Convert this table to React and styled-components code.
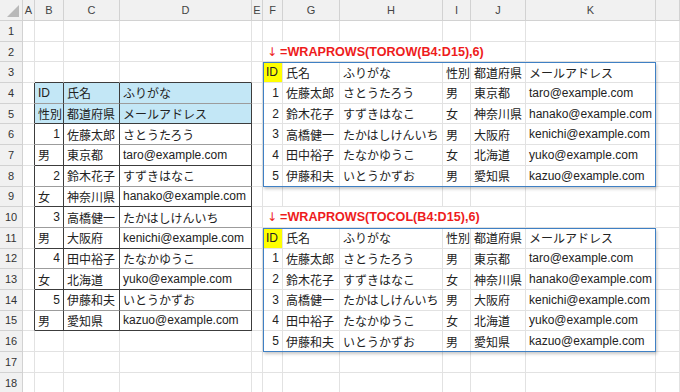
import React from "react";
import styled, { createGlobalStyle } from "styled-components";

const GRID = "#e2e2e2";
const HEAD_LINE = "#d2d2d2";
const INK = "#3c3c3c";
const SOFT = "#9c9c9c";
const BLUE_FILL = "#c3e7f6";

const COLS = ["A", "B", "C", "D", "E", "F", "G", "H", "I", "J", "K", ""];
const ROWS = 18;

const header = ["ID", "氏名", "ふりがな", "性別", "都道府県", "メールアドレス"];
const records = [
  [1, "佐藤太郎", "さとうたろう", "男", "東京都", "taro@example.com"],
  [2, "鈴木花子", "すずきはなこ", "女", "神奈川県", "hanako@example.com"],
  [3, "高橋健一", "たかはしけんいち", "男", "大阪府", "kenichi@example.com"],
  [4, "田中裕子", "たなかゆうこ", "女", "北海道", "yuko@example.com"],
  [5, "伊藤和夫", "いとうかずお", "男", "愛知県", "kazuo@example.com"],
];

// sheet cells keyed by "col,row" (col index 1 = A)
const buildCells = () => {
  const cells = {};
  const put = (c, r, v, extra = {}) => {
    cells[`${c},${r}`] = { v, ...extra };
  };

  // source table B4:D15
  const source = [header.slice(0, 3), header.slice(3)];
  records.forEach((rec) => {
    source.push(rec.slice(0, 3));
    source.push(rec.slice(3));
  });
  source.forEach((row, i) => {
    const r = 4 + i;
    row.forEach((v, j) => {
      put(2 + j, r, v, {
        fill: i < 2 ? BLUE_FILL : null,
        rb: INK,
        bb: r % 2 === 1 || r === 15 ? INK : SOFT,
      });
    });
    cells[`1,${r}`] = { v: "", rb: INK };
  });
  [2, 3, 4].forEach((c) => put(c, 3, "", { bb: INK }));

  // spilled results F3:K8 and F11:K16
  [3, 11].forEach((top) => {
    [header, ...records].forEach((row, i) => {
      row.forEach((v, j) => {
        put(6 + j, top + i, v, { fill: i === 0 && j === 0 ? "#ffff00" : null });
      });
    });
  });
  return cells;
};

const cells = buildCells();

const GlobalStyle = createGlobalStyle`
  html, body {
    margin: 0;
    padding: 0;
    background: #fff;
  }
  body {
    font-family: "Liberation Sans", "Noto Sans CJK JP", sans-serif;
    overflow: hidden;
  }
`;

const Sheet = styled.div`
  display: grid;
  grid-template-columns: 23px 12px 29px 56px 132px 11px 20px 57px 103px 28px 55px 130px 1fr;
  grid-template-rows: 21px repeat(${ROWS}, 20.7px);
  width: 680px;
  height: 392px;
  overflow: hidden;
`;

const Corner = styled.div`
  grid-row: 1;
  grid-column: 1;
  background: #f1f1f1;
  border-right: 1px solid ${HEAD_LINE};
  border-bottom: 1px solid ${HEAD_LINE};
  display: flex;
  align-items: flex-end;
  justify-content: flex-end;
  padding: 0 3px 3px 0;
  box-sizing: border-box;
`;

const ColHead = styled.div`
  grid-row: 1;
  grid-column: ${(p) => p.$c};
  background: #f1f1f1;
  border-right: 1px solid ${HEAD_LINE};
  border-bottom: 1px solid ${HEAD_LINE};
  box-sizing: border-box;
  display: flex;
  align-items: center;
  justify-content: center;
  font-size: 11px;
  color: #444;
`;

const RowHead = styled.div`
  grid-row: ${(p) => p.$r};
  grid-column: 1;
  background: #f1f1f1;
  border-right: 1px solid ${HEAD_LINE};
  border-bottom: 1px solid ${HEAD_LINE};
  box-sizing: border-box;
  display: flex;
  align-items: center;
  justify-content: center;
  font-size: 11px;
  color: #333;
`;

const Cell = styled.div`
  grid-row: ${(p) => p.$r};
  grid-column: ${(p) => p.$c};
  box-sizing: border-box;
  border-right: 1px solid ${(p) => p.$rb || GRID};
  border-bottom: 1px solid ${(p) => p.$bb || GRID};
  background: ${(p) => p.$fill || "transparent"};
  display: flex;
  align-items: center;
  justify-content: ${(p) => (p.$num ? "flex-end" : "flex-start")};
  padding: 0 3px;
  font-size: 12px;
  color: #222;
  white-space: nowrap;
  overflow: hidden;
`;

const Formula = styled.div`
  grid-row: ${(p) => p.$r};
  grid-column: 7 / 12;
  z-index: 1;
  background: #fff;
  border-right: 1px solid ${GRID};
  border-bottom: 1px solid ${GRID};
  box-sizing: border-box;
  display: flex;
  align-items: center;
  padding-left: 4px;
  gap: 3px;
  white-space: nowrap;
  color: #ee1c1c;
`;

const Arrow = styled.span`
  font-family: "DejaVu Sans", sans-serif;
  font-size: 12px;
`;

const FormulaText = styled.span`
  font-weight: bold;
  font-size: 12.6px;
`;

const SpillFrame = styled.div`
  grid-row: ${(p) => p.$rows};
  grid-column: 7 / 13;
  z-index: 2;
  border: 1.5px solid #3f80c4;
  box-shadow: 1px 2px 3px rgba(0, 0, 0, 0.22);
  pointer-events: none;
`;

const CornerMark = () => (
  <svg width="12" height="12" viewBox="0 0 12 12">
    <polygon points="12,0 12,12 0,12" fill="#b9b9b9" />
  </svg>
);

export default function App() {
  const body = [];
  for (let r = 1; r <= ROWS; r++) {
    body.push(
      <RowHead key={`rh${r}`} $r={r + 1}>
        {r}
      </RowHead>
    );
    for (let c = 1; c <= COLS.length; c++) {
      const cell = cells[`${c},${r}`] || {};
      const v = cell.v ?? "";
      body.push(
        <Cell
          key={`${c},${r}`}
          $r={r + 1}
          $c={c + 1}
          $fill={cell.fill}
          $rb={cell.rb}
          $bb={cell.bb}
          $num={typeof v === "number"}
        >
          {v}
        </Cell>
      );
    }
  }

  return (
    <>
      <GlobalStyle />
      <Sheet>
        <Corner>
          <CornerMark />
        </Corner>
        {COLS.map((name, i) => (
          <ColHead key={`ch${i}`} $c={i + 2}>
            {name}
          </ColHead>
        ))}
        {body}
        <Formula $r={3}>
          <Arrow>↓</Arrow>
          <FormulaText>=WRAPROWS(TOROW(B4:D15),6)</FormulaText>
        </Formula>
        <Formula $r={11}>
          <Arrow>↓</Arrow>
          <FormulaText>=WRAPROWS(TOCOL(B4:D15),6)</FormulaText>
        </Formula>
        <SpillFrame $rows="4 / 10" />
        <SpillFrame $rows="12 / 18" />
      </Sheet>
    </>
  );
}
